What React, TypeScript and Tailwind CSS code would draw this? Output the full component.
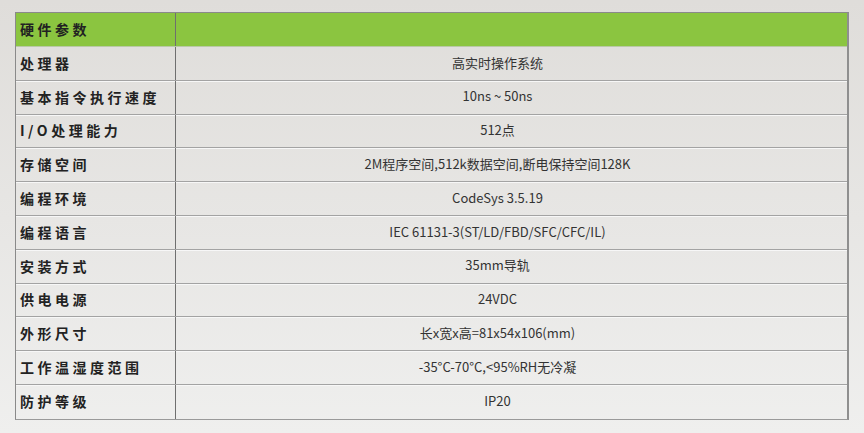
import React from "react";

const specs = [
  { name: "处理器", value: "高实时操作系统" },
  { name: "基本指令执行速度", value: "10ns ~ 50ns" },
  { name: "I/O处理能力", value: "512点" },
  { name: "存储空间", value: "2M程序空间,512k数据空间,断电保持空间128K" },
  { name: "编程环境", value: "CodeSys 3.5.19" },
  { name: "编程语言", value: "IEC 61131-3(ST/LD/FBD/SFC/CFC/IL)" },
  { name: "安装方式", value: "35mm导轨" },
  { name: "供电电源", value: "24VDC" },
  { name: "外形尺寸", value: "长x宽x高=81x54x106(mm)" },
  { name: "工作温湿度范围", value: "-35°C-70°C,<95%RH无冷凝" },
  { name: "防护等级", value: "IP20" },
];

const App = () => {
  return (
    <div
      className="w-[864px] h-[433px] bg-gradient-to-b from-[#dfddda] to-[#efefee] pt-[12px] pl-[15px]"
      style={{ fontFamily: '"Noto Sans CJK SC", "Noto Sans", sans-serif' }}
    >
      <div className="w-[834px] border-l border-t border-[#8a8a8a] border-r-2 border-r-[#8f8f8f] border-b border-b-[#9a9a9a]">
        <div className="flex h-[34px] bg-[#8bc540] border-b border-[#b9c9a6]">
          <div className="w-[160px] border-r border-[#6f6f6f] flex items-center pl-[4px] text-[14px] font-semibold tracking-[3.5px] text-[#222]">
            硬件参数
          </div>
          <div className="flex-1" />
        </div>
        {specs.map((row, i) => (
          <div
            key={i}
            className={`flex h-[33.8px] ${
              i < specs.length - 1 ? "border-b border-[#a3a3a3] shadow-[0_1px_0_#f7f7f7]" : ""
            }`}
          >
            <div className="w-[160px] border-r border-[#6f6f6f] flex items-center pl-[4px] text-[14px] font-semibold tracking-[3.5px] text-[#222]">
              {row.name}
            </div>
            <div className="flex-1 flex items-center justify-center pr-[28px] pb-[2px] text-[13px] text-[#333]">
              {row.value}
            </div>
          </div>
        ))}
      </div>
    </div>
  );
};

export default App;
